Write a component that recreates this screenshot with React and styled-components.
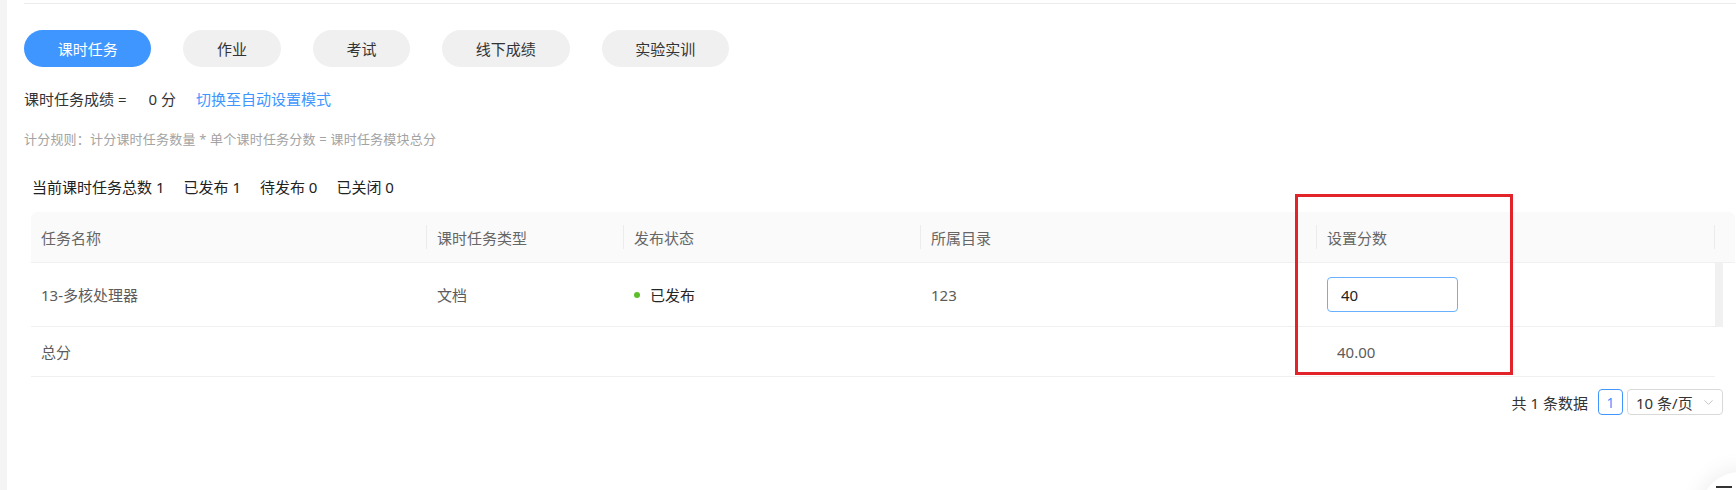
import React from 'react';
import styled, { createGlobalStyle } from 'styled-components';
import { ChevronDown } from 'lucide-react';

const GlobalStyle = createGlobalStyle`
  html, body {
    margin: 0;
    padding: 0;
    background: #fff;
    overflow: hidden;
  }
  body {
    font-family: "Noto Sans", "Noto Sans CJK SC", sans-serif;
    color: #333;
  }
`;

const Page = styled.div`
  position: relative;
  display: flex;
  width: 1736px;
  height: 490px;
  overflow: hidden;
  background: #fff;
`;

const SideStrip = styled.div`
  width: 7px;
  flex-shrink: 0;
  background: #f4f4f4;
`;

const Main = styled.div`
  flex: 1;
  display: flex;
  flex-direction: column;
  padding: 0 13px 0 17px;
  min-width: 0;
`;

const TopRule = styled.div`
  margin-top: 3px;
  height: 1px;
  background: #ebebeb;
  margin-right: -13px;
`;

const TabBar = styled.div`
  display: flex;
  gap: 32px;
  margin-top: 26px;
`;

const Tab = styled.div`
  height: 37px;
  padding: 0 33.7px;
  border-radius: 19px;
  display: flex;
  align-items: center;
  font-size: 15px;
  color: ${p => (p.$active ? '#fff' : '#333')};
  background: ${p => (p.$active ? '#4096ff' : '#f0f0f0')};
  cursor: pointer;
`;

const ScoreLine = styled.div`
  margin-top: 21px;
  font-size: 15px;
  line-height: 22px;
  color: #333;
  display: flex;
`;

const Score = styled.span`
  margin-left: 22px;
`;

const SwitchLink = styled.a`
  margin-left: 20px;
  color: #4096ff;
  text-decoration: none;
  cursor: pointer;
`;

const RuleText = styled.div`
  margin-top: 19px;
  font-size: 13px;
  line-height: 20px;
  letter-spacing: 0.2px;
  color: #a3a3a3;
`;

const Stats = styled.div`
  margin-top: 27px;
  padding-left: 8px;
  display: flex;
  gap: 19px;
  font-size: 15px;
  line-height: 22px;
  color: #222;
`;

const Table = styled.div`
  margin-top: 14px;
  margin-left: 7px;
  display: grid;
  grid-template-columns: 396px 197px 297px 396px 398px 8px;
  font-size: 15px;
`;

const HeadCell = styled.div`
  position: relative;
  height: 50px;
  padding: 0 10px;
  display: flex;
  align-items: center;
  background: #fafafa;
  color: #666;
  border-bottom: 1px solid #f0f0f0;
  ${p => p.$first && 'border-top-left-radius: 6px;'}
  ${p => p.$last && 'border-top-right-radius: 6px;'}
  ${p =>
    !p.$first &&
    `&::before {
      content: '';
      position: absolute;
      left: -1px;
      top: 13px;
      height: 24px;
      width: 1px;
      background: #ececec;
    }`}
`;

const Cell = styled.div`
  height: ${p => (p.$summary ? '49px' : '63px')};
  padding: 0 ${p => (p.$indent ? '20px' : '10px')};
  display: flex;
  align-items: center;
  color: #5c5c5c;
  border-bottom: 1px solid #f0f0f0;
`;

const Gutter = styled.div`
  background: ${p => (p.$track ? '#f1f1f1' : '#fff')};
`;

const Status = styled.span`
  display: flex;
  align-items: center;
  gap: 10px;
  color: #262626;
  &::before {
    content: '';
    width: 6px;
    height: 6px;
    border-radius: 50%;
    background: #5cbf2a;
  }
`;

const ScoreInput = styled.input`
  box-sizing: border-box;
  width: 131px;
  height: 35px;
  padding: 0 13px;
  border: 1px solid #69b1ff;
  border-radius: 4px;
  font-family: inherit;
  font-size: 15px;
  color: #222;
  outline: none;
  background: #fff;
`;

const Pagination = styled.div`
  margin-top: 12px;
  display: flex;
  justify-content: flex-end;
  align-items: center;
  font-size: 15px;
  color: #333;
`;

const Total = styled.span`
  margin-right: 10px;
`;

const PageButton = styled.div`
  box-sizing: border-box;
  width: 25px;
  height: 26px;
  border: 1px solid #4096ff;
  border-radius: 4px;
  color: #4096ff;
  font-size: 14px;
  display: flex;
  align-items: center;
  justify-content: center;
  margin-right: 4px;
`;

const SizeSelect = styled.div`
  box-sizing: border-box;
  width: 96px;
  height: 26px;
  border: 1px solid #d9d9d9;
  border-radius: 4px;
  padding: 0 6px 0 8px;
  display: flex;
  align-items: center;
  justify-content: space-between;
  font-size: 15px;
  color: #333;
`;

const Highlight = styled.div`
  position: absolute;
  left: 1295px;
  top: 194px;
  width: 218px;
  height: 181px;
  box-sizing: border-box;
  border: 3px solid #e3232a;
  pointer-events: none;
`;

const FloatButton = styled.div`
  position: absolute;
  left: 1700px;
  top: 472px;
  width: 80px;
  height: 80px;
  border-radius: 50%;
  background: #fff;
  box-shadow: 0 0 24px rgba(0, 0, 0, 0.09);
  &::after {
    content: '';
    position: absolute;
    left: 16px;
    top: 14px;
    width: 16px;
    height: 2px;
    background: #333;
  }
`;

const tabs = ['课时任务', '作业', '考试', '线下成绩', '实验实训'];
const headers = ['任务名称', '课时任务类型', '发布状态', '所属目录', '设置分数'];

export default function App() {
  return (
    <Page>
      <GlobalStyle />
      <SideStrip />
      <Main>
        <TopRule />
        <TabBar>
          {tabs.map((t, i) => (
            <Tab key={t} $active={i === 0}>{t}</Tab>
          ))}
        </TabBar>
        <ScoreLine>
          课时任务成绩 =<Score>0 分</Score>
          <SwitchLink>切换至自动设置模式</SwitchLink>
        </ScoreLine>
        <RuleText>计分规则：计分课时任务数量 * 单个课时任务分数 = 课时任务模块总分</RuleText>
        <Stats>
          <span>当前课时任务总数 1</span>
          <span>已发布 1</span>
          <span>待发布 0</span>
          <span>已关闭 0</span>
        </Stats>
        <Table>
          {headers.map((h, i) => (
            <HeadCell key={h} $first={i === 0}>{h}</HeadCell>
          ))}
          <HeadCell $last />

          <Cell>13-多核处理器</Cell>
          <Cell>文档</Cell>
          <Cell><Status>已发布</Status></Cell>
          <Cell>123</Cell>
          <Cell><ScoreInput defaultValue="40" readOnly /></Cell>
          <Gutter $track />

          <Cell $summary>总分</Cell>
          <Cell $summary />
          <Cell $summary />
          <Cell $summary />
          <Cell $summary $indent>40.00</Cell>
          <Gutter />
        </Table>
        <Pagination>
          <Total>共 1 条数据</Total>
          <PageButton>1</PageButton>
          <SizeSelect>
            10 条/页
            <ChevronDown size={15} color="#bfbfbf" strokeWidth={1.5} />
          </SizeSelect>
        </Pagination>
      </Main>
      <Highlight />
      <FloatButton />
    </Page>
  );
}
